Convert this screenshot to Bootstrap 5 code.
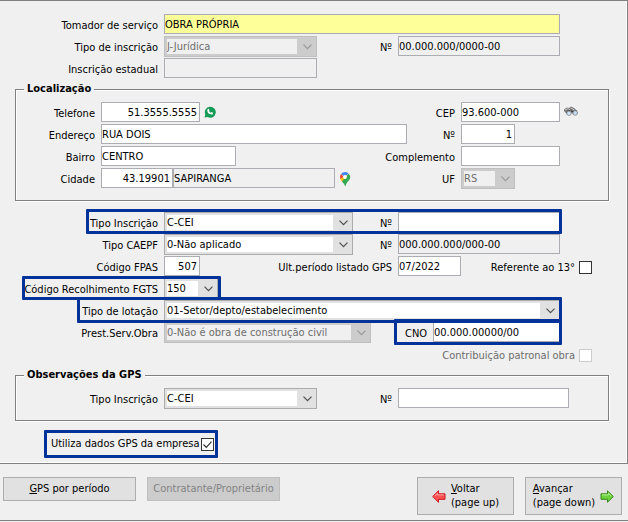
<!DOCTYPE html>
<html lang="pt-BR">
<head>
<meta charset="utf-8">
<meta name="viewport" content="width=device-width, initial-scale=1">
<title>Tomador de serviço</title>
<link href="https://cdn.jsdelivr.net/npm/bootstrap@5.3.0/dist/css/bootstrap.min.css" rel="stylesheet">
<style>
  body { background: #f0f0f0; color: #000; font: 11px/20px "DejaVu Sans Condensed", "DejaVu Sans", sans-serif; }
  .panel { border: solid #808080; border-width: 1px 1px 1px 0; box-shadow: inset -1px -1px #fff; padding: 13px 0 5px; }
  .line { display: grid; column-gap: 6px; height: 22px; align-items: start; position: relative; white-space: nowrap; }
  .line-main { grid-template-columns: 158px 189fr 33px 162fr 26px; margin-right: 35px; }
  .line-place { grid-template-columns: 79px 306fr 42px 147fr; }
  .line-gps { grid-template-columns: 142px 189fr 33px 171fr; margin-right: 39px; }
  .line label { padding-top: 2px; }
  .line > label { display: flex; justify-content: flex-end; }
  .wide { grid-column: 2 / 5; }
  .tail { grid-column: 4 / 6; }
  .field, .combo { height: 20px; border: 1px solid #abadb3; border-radius: 0; background: #fff; color: #000; padding: 0; min-width: 0; width: 100%; line-height: 18px; }
  .field[readonly] { background: #f0f0f0; }
  .field.owner { background: #ff9; }
  .field.num { text-align: right; padding-right: 2px; }
  .combo { height: 21px; border-color: #acacac; padding: 1px 20px 0 2px; line-height: 18px; appearance: none;
    background: url("data:image/svg+xml,%3Csvg xmlns='http://www.w3.org/2000/svg' width='9' height='6'%3E%3Cpath d='M.5 .7l4 4 4-4' fill='none' stroke='%23505050' stroke-width='1.2'/%3E%3C/svg%3E") no-repeat right 4px center,
      linear-gradient(#fff, #fff) no-repeat 2px 2px / calc(100% - 21px) calc(100% - 4px), #e1e1e1; }
  .combo:disabled { opacity: 1; color: #6d6d6d; border-color: #bfbfbf;
    background: url("data:image/svg+xml,%3Csvg xmlns='http://www.w3.org/2000/svg' width='9' height='6'%3E%3Cpath d='M.5 .7l4 4 4-4' fill='none' stroke='%23989898' stroke-width='1.2'/%3E%3C/svg%3E") no-repeat right 4px center,
      linear-gradient(#f0f0f0, #f0f0f0) no-repeat 2px 2px / calc(100% - 21px) calc(100% - 4px), #ccc; }
  .s36 { width: 36px; } .s54 { width: 54px; } .s63 { width: 63px; } .s72 { width: 72px; } .s99 { width: 99px; }
  .s135 { width: 135px; } .s153 { width: 153px; } .s162 { width: 162px; } .s207 { width: 207px; }
  .group { border: 1px solid #808080; box-shadow: 1px 1px #fff, inset 1px 1px #fff; margin: 2px 18px 0 15px; padding: 6px 0 10px; }
  .group > legend { float: none; width: auto; font-size: 11px; font-weight: bold; line-height: 14px; margin: 0 0 0 8px; padding: 0 3px; background: #f0f0f0; }
  .tick { appearance: none; width: 13px; height: 13px; border: 1px solid #333; background: #fff; margin: 0; flex: none; }
  .tick:disabled { border-color: #ccc; }
  .tick:checked { background: #fff url("data:image/svg+xml,%3Csvg xmlns='http://www.w3.org/2000/svg' width='11' height='11'%3E%3Cpath d='M1.5 5.500l2.800 2.800 5.200-5.600' fill='none' stroke='%23333' stroke-width='1.2'/%3E%3C/svg%3E"); }
  .ring { position: absolute; inset: -3px 30px 0 86px; border: 3px solid #039; border-radius: 1px; pointer-events: none; z-index: 1; }
  .ring-code { top: -2px; left: 22px; right: auto; width: 199px; }
  .ring-lot { left: 77px; bottom: -1px; }
  .ring-cno { inset: -3px -2px -1px auto; width: 168px; }
  .cno { width: 155px; position: relative; }
  .cno .field { width: 127px; margin-left: auto; }
  .framed { border: 3px solid #039; border-radius: 1px; margin: 9px 0 0 44px; height: 28px; padding: 0 1px 0 4px; width: 174px; }
  .muted { color: #6d6d6d; }
  .after { margin-top: 11px; }
  .push { border: 1px solid #adadad; border-radius: 0; background: #e1e1e1; color: #000; padding: 0; font-size: 11px; line-height: 14px; }
  .push:disabled { background: #ccc; border-color: #bfbfbf; color: #838383; opacity: 1; }
  .push-small { width: 133px; height: 24px; }
  .push-big { width: 97px; height: 38px; gap: 5px; }
  .footer-bar { padding: 13px 6px 5px 3px; gap: 11px; border-bottom: 1px solid #808080; }
</style>
<script src="https://cdn.jsdelivr.net/npm/bootstrap@5.3.0/dist/js/bootstrap.bundle.min.js"></script>
</head>
<body>
<form>
  <main class="panel">
    <div class="line line-main"><label for="tomador">Tomador de serviço</label><input id="tomador" class="field owner wide" value="OBRA PRÓPRIA"></div>
    <div class="line line-main">
      <label for="tipo">Tipo de inscrição</label><select id="tipo" class="combo s153" disabled><option>J-Jurídica</option></select>
      <label for="cnpj">Nº</label><input id="cnpj" class="field" readonly value="00.000.000/0000-00">
    </div>
    <div class="line line-main"><label for="estadual">Inscrição estadual</label><input id="estadual" class="field s153" readonly></div>

    <fieldset class="group">
      <legend>Localização</legend>
      <div class="line line-place">
        <label for="fone">Telefone</label>
        <div class="d-flex align-items-center gap-1"><input id="fone" class="field num s99" value="51.3555.5555">
          <svg width="12" height="12" viewBox="0 0 12 12" aria-hidden="true"><path d="M.5 11.5l.8-3A5.5 5.5 0 1 1 3.600 11z" fill="#169b57"/><path d="M3.800 3.100l.9-.3.8 1.500-.5.8q.6 1.200 1.800 1.700l.8-.7 1.500.8q0 1.500-1.600 1.700Q3.300 8.100 3.300 4.300z" fill="#fff"/></svg></div>
        <label for="cep">CEP</label>
        <div class="d-flex align-items-start"><input id="cep" class="field s99" value="93.600-000">
          <svg class="ms-1 mt-1" width="14" height="11" viewBox="0 0 14 11" aria-hidden="true"><path d="M0 3.500L3 1.500l2 .5 2-1.500 3 1.500 3 2.500.5 3-3 1-4-2-3 2.500L0 5z" fill="#77777a"/><path d="M1 4l3-1.500 2 1.500M6.500 1.800l4 2.200" stroke="#c4c4c4" fill="none"/><path d="M3 5.500l3-1M7 5l3 1" stroke="#3a3a3c" fill="none"/><circle cx="5" cy="7.300" r="2.200" fill="#cfe6fa" stroke="#777" stroke-width=".7"/><circle cx="11.200" cy="7" r="2.300" fill="#c2ddf6" stroke="#777" stroke-width=".7"/></svg></div>
      </div>
      <div class="line line-place">
        <label for="rua">Endereço</label><input id="rua" class="field" value="RUA DOIS">
        <label for="numero">Nº</label><input id="numero" class="field num s54" value="1">
      </div>
      <div class="line line-place">
        <label for="bairro">Bairro</label><input id="bairro" class="field s135" value="CENTRO">
        <label for="compl">Complemento</label><input id="compl" class="field s99">
      </div>
      <div class="line line-place">
        <label for="cidade">Cidade</label>
        <div class="d-flex align-items-start"><input id="cidade" class="field num s72" value="43.19901"><input class="field s162" readonly value="SAPIRANGA" aria-label="Nome da cidade">
          <svg class="ms-1 mt-1" width="12" height="15" viewBox="0 0 12 15" aria-hidden="true"><path d="M6 0A5 5 0 0 0 2 2l4 3 3.500-3.600A5 5 0 0 0 6 0z" fill="#4285f4"/><path d="M2 2A5 5 0 0 0 1.200 7L5 5z" fill="#ea4335"/><path d="M1.200 7l1.700 2.500L10.500 3.500 8 3z" fill="#fbbc04"/><path d="M9.500 1.400A5 5 0 0 1 10.500 7.500Q7 11 6.200 14.600 5.200 11.500 2.900 9.500L9 2.500z" fill="#34a853"/><circle cx="6" cy="5" r="1.900" fill="#fff"/></svg></div>
        <label for="uf">UF</label><select id="uf" class="combo s54" disabled><option>RS</option></select>
      </div>
    </fieldset>

    <div class="line line-main after">
      <label for="insc">Tipo Inscrição</label><select id="insc" class="combo"><option>C-CEI</option></select>
      <label for="insc-n">Nº</label><input id="insc-n" class="field"><span class="ring"></span>
    </div>
    <div class="line line-main">
      <label for="caepf">Tipo CAEPF</label><select id="caepf" class="combo"><option>0-Não aplicado</option></select>
      <label for="caepf-n">Nº</label><input id="caepf-n" class="field" readonly value="000.000.000/000-00">
    </div>
    <div class="line line-main">
      <label for="fpas">Código FPAS</label><input id="fpas" class="field num s36" value="507">
      <label for="periodo">Ult.período listado GPS</label>
      <div class="tail d-flex align-items-start"><input id="periodo" class="field s63" value="07/2022"><div class="d-flex align-items-center ms-auto"><label for="ref13" class="me-1">Referente ao 13°</label><input id="ref13" type="checkbox" class="tick"></div></div>
    </div>
    <div class="line line-main"><label for="fgts">Código Recolhimento FGTS</label><select id="fgts" class="combo s54"><option>150</option></select><span class="ring ring-code"></span></div>
    <div class="line line-main"><label for="lotacao">Tipo de lotação</label><select id="lotacao" class="combo wide"><option>01-Setor/depto/estabelecimento</option></select><span class="ring ring-lot"></span></div>
    <div class="line line-main">
      <label for="obra">Prest.Serv.Obra</label>
      <div class="wide d-flex"><select id="obra" class="combo s207" disabled><option>0-Não é obra de construção civil</option></select>
        <div class="cno d-flex ms-auto"><label for="cno">CNO</label><input id="cno" class="field" value="00.000.00000/00"><span class="ring ring-cno"></span></div></div>
    </div>
    <div class="line line-main muted"><div class="tail d-flex align-items-center justify-content-end"><label for="patronal" class="me-1">Contribuição patronal obra</label><input id="patronal" type="checkbox" class="tick" disabled></div></div>

    <fieldset class="group">
      <legend>Observações da GPS</legend>
      <div class="line line-gps">
        <label for="obs">Tipo Inscrição</label><select id="obs" class="combo s153"><option>C-CEI</option></select>
        <label for="obs-n">Nº</label><input id="obs-n" class="field">
      </div>
    </fieldset>
    <div class="framed d-flex align-items-center justify-content-between text-nowrap"><label for="utiliza">Utiliza dados GPS da empresa</label><input id="utiliza" type="checkbox" class="tick" checked></div>
  </main>
  <footer class="footer-bar d-flex align-items-start">
    <button type="button" class="btn push push-small"><u>G</u>PS por período</button>
    <button type="button" class="btn push push-small" disabled>Contratante/Proprietário</button>
    <button type="button" class="btn push push-big ms-auto d-flex align-items-center justify-content-center text-start">
      <svg width="14" height="13" viewBox="0 0 14 13" aria-hidden="true"><path d="M.7 6.500L6.500.8v3h6.500v5.500H6.500v3z" fill="#ff5151" stroke="#c9151b"/><path d="M2.500 6.300l3-3v1.600H12" stroke="#ffa5a5" fill="none"/></svg>
      <span><u>V</u>oltar<br>(page up)</span></button>
    <button type="button" class="btn push push-big d-flex align-items-center justify-content-center text-start">
      <span><u>A</u>vançar<br>(page down)</span>
      <svg width="14" height="13" viewBox="0 0 14 13" aria-hidden="true"><path d="M13.300 6.500L7.500.8v3H1v5.500h6.500v3z" fill="#6cd43a" stroke="#38851c"/><path d="M2 4.900h6.500V3.300l3 3" stroke="#b5f094" fill="none"/></svg></button>
  </footer>
</form>
</body>
</html>
